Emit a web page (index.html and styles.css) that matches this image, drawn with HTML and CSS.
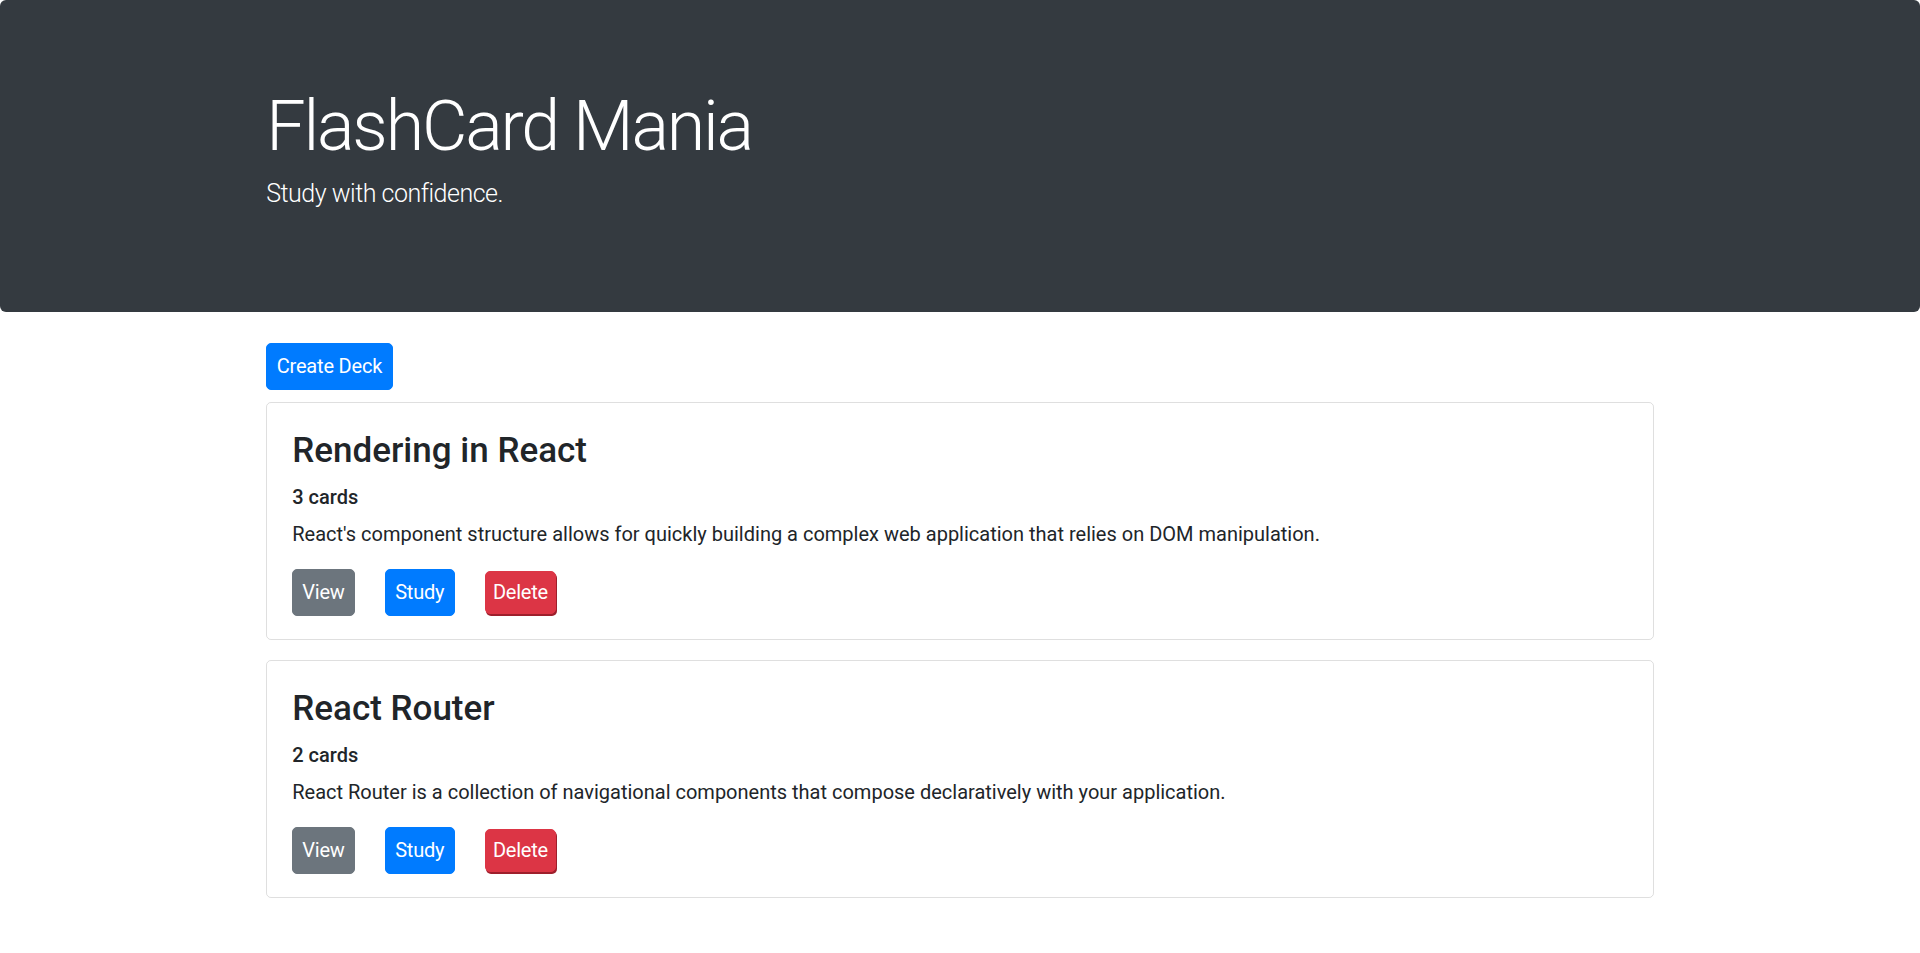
FILE: index.html
```html
<!DOCTYPE html>
<html lang="en">
<head>
<meta charset="utf-8">
<title>FlashCard Mania</title>
<link rel="stylesheet" href="styles.css">
</head>
<body>
<header class="jumbotron">
  <div class="container">
    <h1 class="display">FlashCard Mania</h1>
    <p class="lead">Study with confidence.</p>
  </div>
</header>
<main class="container">
  <div class="toolbar">
    <button class="btn btn-primary">Create Deck</button>
  </div>
  <section class="deck">
    <h3 class="deck-title">Rendering in React</h3>
    <h6 class="deck-count">3 cards</h6>
    <p class="deck-desc">React's component structure allows for quickly building a complex web application that relies on DOM manipulation.</p>
    <div class="actions">
      <button class="btn btn-secondary">View</button>
      <button class="btn btn-primary">Study</button>
      <button class="btn btn-danger">Delete</button>
    </div>
  </section>
  <section class="deck">
    <h3 class="deck-title">React Router</h3>
    <h6 class="deck-count">2 cards</h6>
    <p class="deck-desc">React Router is a collection of navigational components that compose declaratively with your application.</p>
    <div class="actions">
      <button class="btn btn-secondary">View</button>
      <button class="btn btn-primary">Study</button>
      <button class="btn btn-danger">Delete</button>
    </div>
  </section>
</main>
</body>
</html>
```
FILE: styles.css
```css
* { box-sizing: border-box; }
html, body { margin: 0; padding: 0; }
body {
  font-family: Roboto, "Open Sans", sans-serif;
  font-size: 20px;
  line-height: 1.5;
  color: #212529;
  background: #fff;
}
.container {
  max-width: 1425px;
  margin: 0 auto;
  padding: 0 18.75px;
}
.jumbotron {
  background: #343a40;
  color: #fff;
  padding: 80px 0;
  border-radius: 6px;
  margin-bottom: 31px;
}
.display {
  font-size: 70px;
  font-weight: 300;
  line-height: 1.2;
  letter-spacing: -0.031em;
  margin: 4px 0 7px;
}
.lead {
  font-size: 25px;
  font-weight: 300;
  line-height: 1.5;
  letter-spacing: -0.02em;
  margin: 0 0 19px;
}
.toolbar {
  display: flex;
  margin-bottom: 12px;
}
.btn {
  font-family: inherit;
  font-size: 20px;
  line-height: 30px;
  padding: 7.5px 9.5px;
  letter-spacing: -0.01em;
  border: 1px solid transparent;
  border-radius: 5px;
  color: #fff;
  cursor: pointer;
}
.btn-primary { background: #007bff; border-color: #007bff; }
.btn-secondary { background: #6c757d; border-color: #6c757d; padding-right: 9px; padding-left: 9px; }
.btn-danger {
  background: #dc3545;
  border-color: #dc3545;
  line-height: 28px;
  padding: 6.5px 7px;
  align-self: center;
  box-shadow: 1px 2px 0 #9e1f2c;
}
.deck {
  border: 1px solid rgba(0, 0, 0, 0.125);
  border-radius: 5px;
  padding: 27px 25px 23px;
  margin-bottom: 20px;
}
.deck-title {
  font-size: 35px;
  font-weight: 500;
  line-height: 1.2;
  margin: 0 0 13px;
}
.deck-count {
  font-size: 20px;
  font-weight: 500;
  line-height: 1.2;
  margin: 0 0 10px;
}
.deck-desc {
  margin: 0 0 20px;
}
.actions {
  display: flex;
  align-items: flex-start;
  gap: 30px;
}
```
